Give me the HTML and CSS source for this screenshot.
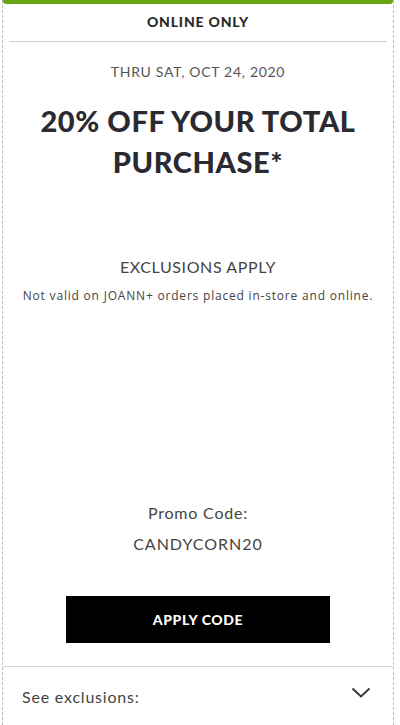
FILE: index.html
```html
<!DOCTYPE html>
<html lang="en">
<head>
  <meta charset="UTF-8">
  <meta name="viewport" content="width=device-width, initial-scale=1.0">
  <title>Coupon</title>
  <link rel="stylesheet" href="styles.css">
</head>
<body>
  <div class="coupon">
    <div class="coupon-bar"></div>
    <div class="coupon-label">ONLINE ONLY</div>
    <div class="coupon-body">
      <div class="coupon-date">THRU SAT, OCT 24, 2020</div>
      <h1 class="coupon-title">20% OFF YOUR TOTAL PURCHASE*</h1>
      <div class="coupon-excl">EXCLUSIONS APPLY</div>
      <div class="coupon-note">Not valid on JOANN+ orders placed in-store and online.</div>
      <div class="coupon-promo">
        <div class="promo-label">Promo Code:</div>
        <div class="promo-code">CANDYCORN20</div>
      </div>
      <button class="apply-btn">APPLY CODE</button>
    </div>
    <div class="coupon-footer">
      <span>See exclusions:</span>
      <svg class="chevron" width="20" height="12" viewBox="0 0 20 12">
        <path d="M1.5 1.5 L10 9.5 L18.5 1.5" fill="none" stroke="#333" stroke-width="1.8"/>
      </svg>
    </div>
  </div>
</body>
</html>
```

FILE: styles.css
```css
body {
  margin: 0;
  background-color: #fff;
  font-family: Lato, "Open Sans", sans-serif;
  color: #333;
}
.coupon {
  margin: 0 6px 0 2px;
  height: 725px;
  border-left: 1px dashed #bbb;
  border-right: 1px dashed #bbb;
  box-sizing: border-box;
  display: flex;
  flex-direction: column;
}
.coupon-bar {
  height: 4px;
  background-color: #67a516;
  border-radius: 0 0 3px 3px;
}
.coupon-label {
  margin: 0 6px;
  padding: 9px 0 11px;
  text-align: center;
  font-size: 14px;
  font-weight: 900;
  letter-spacing: 0.8px;
  color: #2b2b2b;
  border-bottom: 1px solid #cfcfcf;
}
.coupon-body {
  flex: 1;
  display: flex;
  flex-direction: column;
  align-items: center;
  text-align: center;
}
.coupon-date {
  margin-top: 21px;
  font-size: 14px;
  color: #555;
  letter-spacing: 0.7px;
}
.coupon-title {
  margin: 20px 20px 0;
  font-size: 29px;
  line-height: 41px;
  font-weight: 900;
  color: #2a2a30;
  letter-spacing: 0.6px;
}
.coupon-excl {
  margin-top: 75px;
  font-size: 16px;
  color: #444;
  letter-spacing: 0.6px;
}
.coupon-note {
  margin-top: 11px;
  font-family: "Open Sans", sans-serif;
  font-size: 12px;
  color: #444;
  letter-spacing: 0.8px;
}
.coupon-promo {
  margin-top: 199px;
  font-size: 16px;
  color: #444;
  letter-spacing: 0.8px;
}
.promo-code {
  margin-top: 12px;
  letter-spacing: 1px;
}
.apply-btn {
  margin-top: 43px;
  width: 264px;
  height: 47px;
  border: none;
  background-color: #000;
  color: #fff;
  font-family: Lato, sans-serif;
  font-size: 14px;
  font-weight: 900;
  letter-spacing: 0.6px;
  cursor: pointer;
}
.coupon-footer {
  border-top: 1px solid #d6d6d6;
  height: 58px;
  display: flex;
  align-items: center;
  justify-content: space-between;
  padding: 0 22px 0 19px;
  font-size: 16px;
  letter-spacing: 0.8px;
  color: #444;
}
.chevron {
  margin-top: -6px;
}
```
